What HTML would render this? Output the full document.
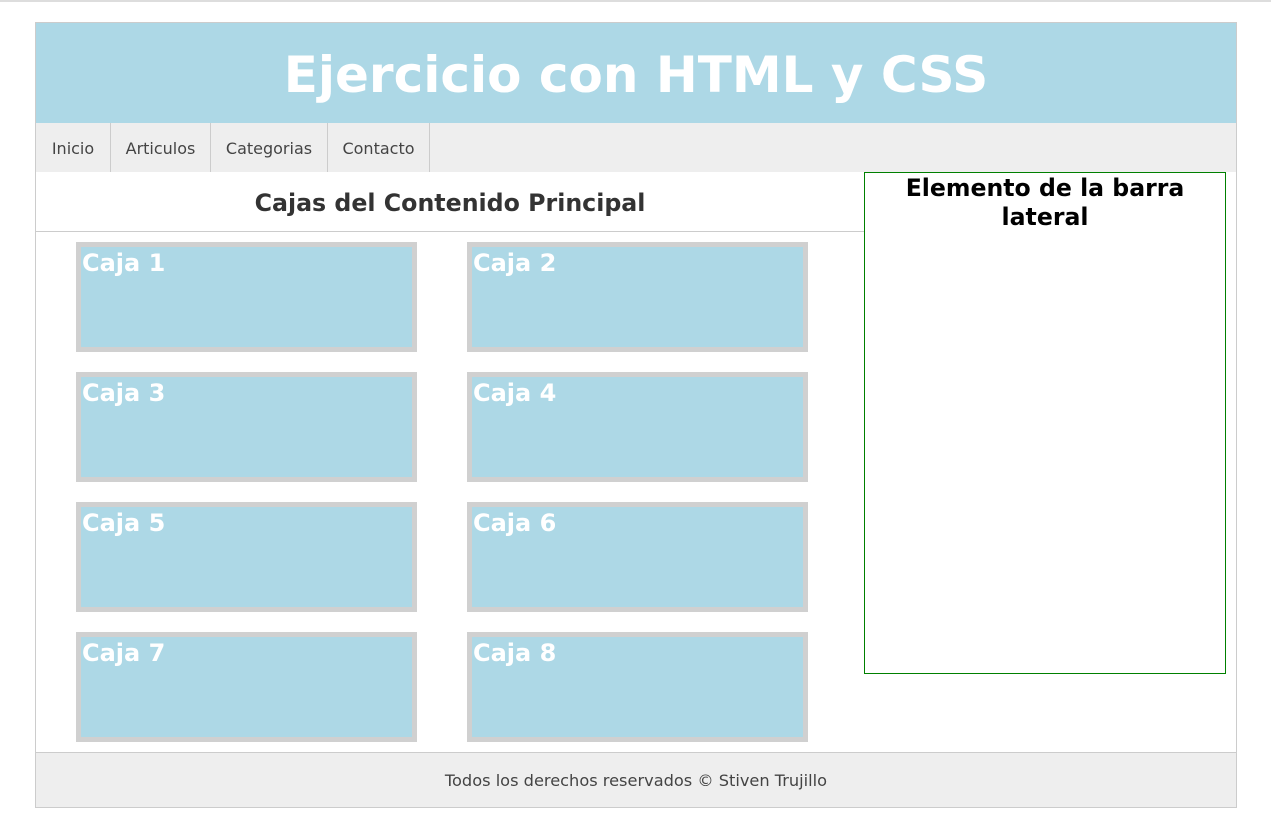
<!DOCTYPE html>
<html><head><meta charset="utf-8"><style>
*{margin:0;padding:0;box-sizing:border-box}
body{width:1271px;height:830px;background:#fff;font-family:"DejaVu Sans",Verdana,sans-serif;position:relative;overflow:hidden}
.topline{position:absolute;left:0;top:0;width:1271px;height:2px;background:#ddd}
.wrap{position:absolute;left:35px;top:22px;width:1202px;height:786px;border:1px solid #ccc}
.hdr{position:absolute;left:36px;top:23px;width:1200px;height:100px;background:#add8e6;color:#fff;font-weight:bold;font-size:50px;text-align:center;line-height:104px}
.nav{position:absolute;left:36px;top:123px;width:1200px;height:49px;background:#eee}
.nav span{position:absolute;top:0;height:49px;line-height:51px;font-size:16px;color:#444;text-align:center;border-right:1px solid #ccc}
.h2{position:absolute;left:36px;top:185px;width:828px;text-align:center;font-weight:bold;font-size:23.7px;color:#333;line-height:36px}
.hr{position:absolute;left:36px;top:231px;width:828px;height:1px;background:#ccc}
.box{position:absolute;width:341px;height:110px;border:5px solid #d0d0d0;background:#add8e6;color:#fff;font-weight:bold;font-size:24px;line-height:32px;padding-left:1px}
.side{position:absolute;left:864px;top:172px;width:362px;height:502px;border:1px solid green;text-align:center;font-weight:bold;font-size:23.6px;line-height:29px;color:#000;padding-top:1px}
.foot{position:absolute;left:36px;top:752px;width:1200px;height:55px;background:#eee;border-top:1px solid #ccc;text-align:center;font-size:16.2px;color:#444;line-height:55px}
</style></head><body>
<div class="topline"></div>
<div class="wrap"></div>
<div class="hdr">Ejercicio con HTML y CSS</div>
<div class="nav">
<span style="left:0;width:75px">Inicio</span>
<span style="left:75px;width:100px">Articulos</span>
<span style="left:175px;width:117px">Categorias</span>
<span style="left:292px;width:102px">Contacto</span>
</div>
<div class="h2">Cajas del Contenido Principal</div>
<div class="hr"></div>
<div class="box" style="left:76px;top:242px">Caja 1</div>
<div class="box" style="left:467px;top:242px">Caja 2</div>
<div class="box" style="left:76px;top:372px">Caja 3</div>
<div class="box" style="left:467px;top:372px">Caja 4</div>
<div class="box" style="left:76px;top:502px">Caja 5</div>
<div class="box" style="left:467px;top:502px">Caja 6</div>
<div class="box" style="left:76px;top:632px">Caja 7</div>
<div class="box" style="left:467px;top:632px">Caja 8</div>
<div class="side">Elemento de la barra<br>lateral</div>
<div class="foot">Todos los derechos reservados © Stiven Trujillo</div>
</body></html>
